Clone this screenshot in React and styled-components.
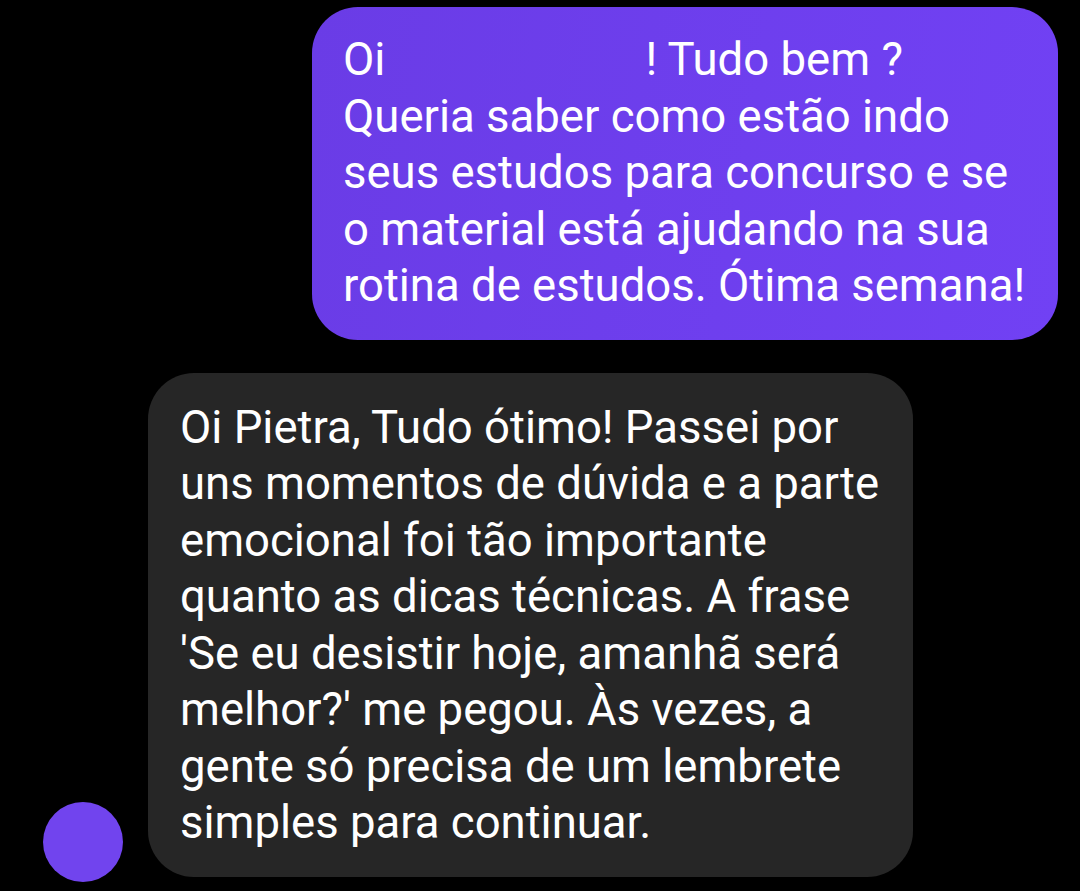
import React from "react";
import styled, { createGlobalStyle } from "styled-components";

const Global = createGlobalStyle`
  html, body { margin: 0; padding: 0; background: #000; }
  body { font-family: Roboto, "Noto Sans", sans-serif; }
`;

const Page = styled.div`
  width: 1080px;
  height: 891px;
  background: #000;
  display: flex;
  flex-direction: column;
  padding-top: 7px;
  box-sizing: border-box;
  overflow: hidden;
`;

const SentRow = styled.div`
  display: flex;
  justify-content: flex-end;
  padding-right: 22px;
`;

const ReceivedRow = styled.div`
  display: flex;
  align-items: flex-end;
  gap: 25px;
  padding-left: 43px;
  margin-top: 33px;
`;

const Bubble = styled.div`
  width: ${(p) => p.$w}px;
  box-sizing: border-box;
  border-radius: 46px;
  padding: ${(p) => p.$pad};
  background: ${(p) =>
    p.$sent ? "linear-gradient(100deg, #6a3ce6 0%, #7141f4 100%)" : "#262626"};
  color: #fff;
  font-size: 45.5px;
  line-height: 56.5px;
  letter-spacing: 0;
`;

const Line = styled.div`
  white-space: nowrap;
`;

const Gap = styled.span`
  display: inline-block;
  width: ${(p) => p.$w}px;
`;

const Avatar = styled.div`
  width: 80px;
  height: 80px;
  border-radius: 50%;
  background: #7144ee;
  flex-shrink: 0;
  margin-bottom: -5px;
`;

export default function App() {
  return (
    <Page>
      <Global />
      <SentRow>
        <Bubble $sent $w={746} $pad="25px 31px 25px 31px">
          <Line>
            Oi<Gap $w={260} />! Tudo bem ?
          </Line>
          <Line>Queria saber como estão indo</Line>
          <Line>seus estudos para concurso e se</Line>
          <Line>o material está ajudando na sua</Line>
          <Line>rotina de estudos. Ótima semana!</Line>
        </Bubble>
      </SentRow>
      <ReceivedRow>
        <Avatar />
        <Bubble $w={765} $pad="27px 32px 25px 32px">
          <Line>Oi Pietra, Tudo ótimo! Passei por</Line>
          <Line>uns momentos de dúvida e a parte</Line>
          <Line>emocional foi tão importante</Line>
          <Line>quanto as dicas técnicas. A frase</Line>
          <Line>'Se eu desistir hoje, amanhã será</Line>
          <Line>melhor?' me pegou. Às vezes, a</Line>
          <Line>gente só precisa de um lembrete</Line>
          <Line>simples para continuar.</Line>
        </Bubble>
      </ReceivedRow>
    </Page>
  );
}
